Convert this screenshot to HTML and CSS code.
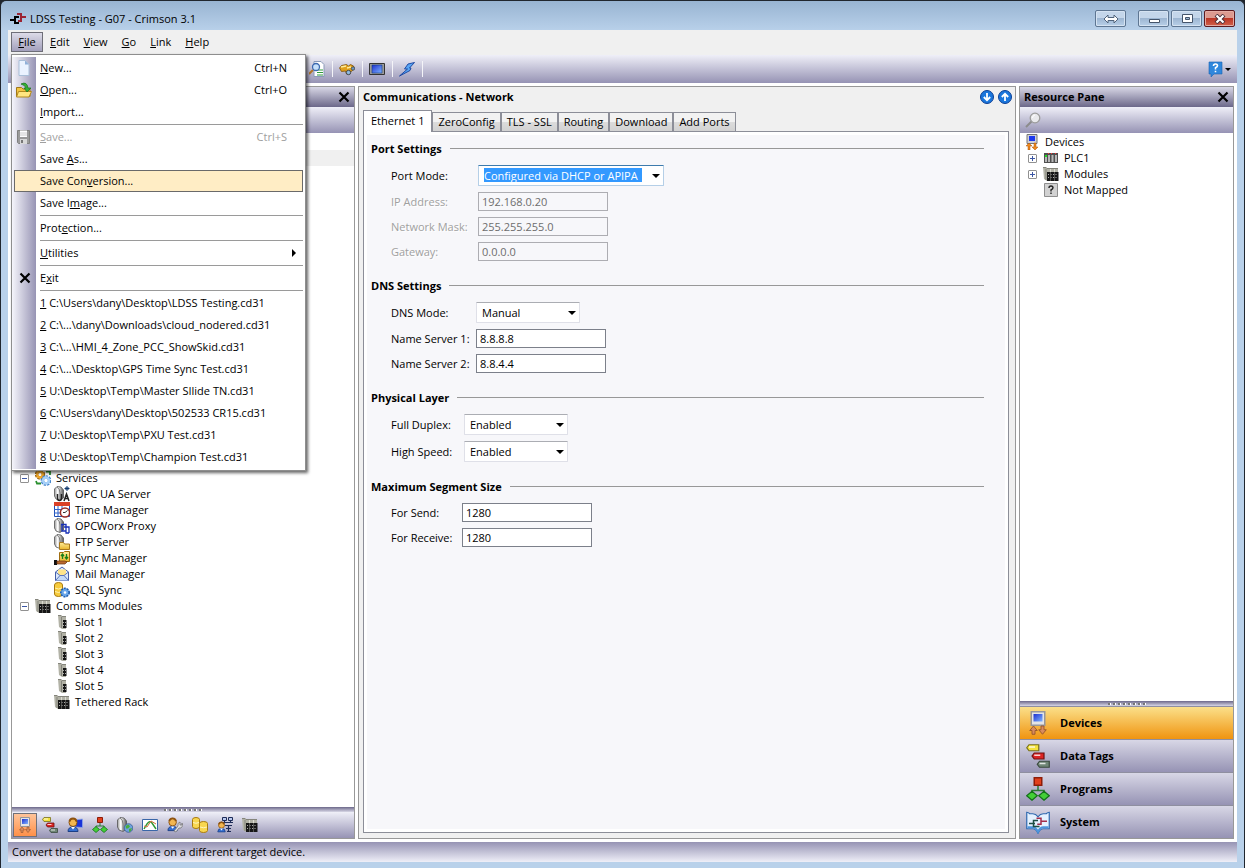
FILE: index.html
```
<!DOCTYPE html>
<html lang="en">
<head>
  <meta charset="UTF-8" />
  <title>LDSS Testing - G07 - Crimson 3.1</title>
  <meta name="viewport" content="width=device-width, initial-scale=1.0" />
  <link rel="stylesheet" href="styles.css">
</head>
<body>
  <!-- shared icons -->
  <svg class="sprite" aria-hidden="true">
    <defs>
      <linearGradient id="tower" x1="0" x2="1" y1="0" y2="0"><stop offset="0" stop-color="#999" /><stop offset="0.35" stop-color="#fff" /><stop offset="0.6" stop-color="#c4c4c4" /><stop offset="1" stop-color="#555" /></linearGradient>
      <linearGradient id="gold" x1="0" x2="0" y1="0" y2="1"><stop offset="0" stop-color="#ffee9a" /><stop offset="1" stop-color="#e9b52c" /></linearGradient>
      <linearGradient id="screen" x1="0" x2="1" y1="0" y2="1"><stop offset="0" stop-color="#1c2fd0" /><stop offset="1" stop-color="#7fb4ff" /></linearGradient>
    </defs>
    <symbol id="i-close" viewBox="0 0 12 12"><path d="M1.5 1.5l9 9M10.500 1.500l-9 9" stroke="#000" stroke-width="2.200" /></symbol>
    <symbol id="i-devices" viewBox="0 0 16 16">
      <path d="M3.500 .5h9v9h-9z" fill="#e4e4e6" stroke="#96969c" />
      <path d="M5 2h6v5H5z" fill="url(#screen)" />
      <path d="M5 10l2.500 3H6v2.500H4V13H2.500zM11 15.500L8.500 12.500H10V10h2v2.500h1.500z" fill="#d98a5e" stroke="#96552a" stroke-width=".6" />
    </symbol>
    <symbol id="i-tags" viewBox="0 0 16 16">
      <path d="M.5 2.500l1.500-2h6.500v4H2z" fill="#f4e23c" stroke="#77701c" stroke-width=".8" />
      <path d="M4 8l1.500-2H12v4H5.500z" fill="#dc2424" stroke="#701010" stroke-width=".8" />
      <path d="M7.500 13.500l1.500-2h6.500v4H9z" fill="#6f8676" stroke="#3a4a3e" stroke-width=".8" />
      <path d="M2 2h4M5.500 7.500h4M9 13h4" stroke="#fff" stroke-opacity=".8" />
    </symbol>
    <symbol id="i-programs" viewBox="0 0 16 16">
      <path d="M8 6v3M4 12V9h8v3" fill="none" stroke="#2c7a34" />
      <path d="M5.500 .5h5v5h-5z" fill="#e2401c" stroke="#8e1c08" />
      <path d="M4 9.500l3.500 3-3.500 3-3.500-3zM12 9.500l3.500 3-3.500 3-3.500-3z" fill="#43cf37" stroke="#14701a" stroke-width=".8" />
    </symbol>
    <symbol id="i-server" viewBox="0 0 16 16">
      <path d="M.5 3L3 .5l4 .5 2.500 3v8L6 14.500l-4-1.500L.5 10z" fill="url(#tower)" stroke="#555" stroke-width=".8" />
      <path d="M3 1q3 2 3 6v7" fill="none" stroke="#555" stroke-width=".7" />
    </symbol>
    <symbol id="i-web" viewBox="0 0 16 16">
      <use href="#i-server" width="16" height="16" />
      <circle cx="11.500" cy="11" r="4.300" fill="#6ea2dc" stroke="#2b5390" stroke-width=".7" />
      <path d="M8.500 9l3-1.500 1.500 2-2 2-2 0zM12 12l3-1-1 3-2 1z" fill="#49ae3c" />
    </symbol>
    <symbol id="i-opcua" viewBox="0 0 16 16">
      <use href="#i-server" width="16" height="16" />
      <path d="M3.500 8v4q0 2.500 2 2.500t2-2.500V8M10 15l2.500-7 2.500 7M11 12.500h3" fill="none" stroke="#222" stroke-width="1.500" />
      <path d="M13 0v5M10.500 2.500h5M11.500 1l3 3M14.500 1l-3 3" stroke="#123a70" />
    </symbol>
    <symbol id="i-time" viewBox="0 0 16 16">
      <path d="M.5 1.500h15v13H.5z" fill="#fff" stroke="#1f4fb4" />
      <path d="M0 0h16v4H0z" fill="#da4126" />
      <path d="M4 4v10M8 4v10M0 7.500h15M0 11h15" stroke="#2d62cc" />
      <circle cx="11" cy="10.500" r="4.600" fill="#fff" stroke="#9c2b22" stroke-width="1.500" />
      <path d="M11 10.500l2.500-2M11 10.500h-2" fill="none" stroke="#333" />
    </symbol>
    <symbol id="i-opcworx" viewBox="0 0 16 16">
      <use href="#i-server" width="16" height="16" />
      <path d="M7 6.500h5v5M8 7v6h4M10 9h5v6M12 11v4h3" fill="none" stroke="#1730b8" stroke-width="1.300" />
    </symbol>
    <symbol id="i-ftp" viewBox="0 0 16 16">
      <use href="#i-server" width="16" height="16" />
      <path d="M5.500 8.500h4l1 1.500h5v5.500h-10z" fill="url(#gold)" stroke="#a8781c" />
    </symbol>
    <symbol id="i-sync" viewBox="0 0 16 16">
      <path d="M5.500 2.500h4l1-1h5v10h-10z" fill="url(#gold)" stroke="#a06d10" />
      <path d="M8.500 9V4M7 6l1.500-2L10 6M12.500 4v5M11 7l1.500 2L14 7" fill="none" stroke="#168018" stroke-width="1.300" />
      <path d="M0 10h3v5H0z" fill="#111" />
      <path d="M3 11h8l2 1-2 2H3z" fill="#b9692f" stroke="#6a3512" stroke-width=".7" />
    </symbol>
    <symbol id="i-mail" viewBox="0 0 16 16">
      <path d="M1.500 6L8 1l6.500 5v8.500h-13z" fill="#dce9fb" stroke="#4660a8" />
      <path d="M4 3.500h8V8l-4 2-4-2z" fill="#ffe48a" />
      <path d="M1.500 14.500L6 9.500h4l4.500 5M1.500 6L6 9.500M14.500 6L10 9.500" fill="#c3d9f7" stroke="#5b74b8" />
    </symbol>
    <symbol id="i-sql" viewBox="0 0 16 16">
      <path d="M.5 3q0-2.500 4-2.500t4 2.500v9q0 2.500-4 2.500t-4-2.500z" fill="#f7cb3c" stroke="#a87a10" />
      <path d="M1 6q3.500 2 7 0M1 9.500q3.500 2 7 0" fill="none" stroke="#fff3b0" />
      <circle cx="11" cy="10.500" r="4.200" fill="#68a6ea" stroke="#1f5cae" stroke-dasharray="2 1" stroke-width="1.600" />
      <circle cx="11" cy="10.500" r="1.300" fill="#fff" />
    </symbol>
    <symbol id="i-services" viewBox="0 0 16 16">
      <circle cx="5" cy="4.500" r="3.400" fill="none" stroke="#9c6610" stroke-width="3.500" stroke-dasharray="2 .7" />
      <circle cx="5" cy="4.500" r="2.800" fill="none" stroke="#f0a626" stroke-width="2.200" />
      <circle cx="11" cy="10.500" r="3.600" fill="none" stroke="#4786cc" stroke-width="3.500" stroke-dasharray="2 .7" />
      <circle cx="11" cy="10.500" r="3" fill="none" stroke="#a6d0f8" stroke-width="2.400" />
      <path d="M11 1.500h4v3.500M1 11l1 2.500h4" fill="none" stroke="#2a9030" stroke-width="1.800" />
    </symbol>
    <symbol id="i-rack" viewBox="0 0 16 16">
      <path d="M0 1h3l1 1h11v13H4l-3-2z" fill="#b2b2a6" />
      <path d="M0 1.500h3l1 1h11M3 3v11" fill="none" stroke="#85857c" />
      <path d="M7.500 3v3M11.500 3v3" stroke="#dcdcd2" />
      <path d="M4 6h11.500v9H4z" fill="#161616" />
      <path d="M5 8.500h10M5 11.500h10" stroke="#aaa" stroke-dasharray="1 1.500" />
      <path d="M7.500 6v9M11.500 6v9" stroke="#6e6e68" stroke-width=".7" />
    </symbol>
    <symbol id="i-slot" viewBox="0 0 16 16">
      <path d="M4 1h3l1 1h4v13H8l-3-2z" fill="#b2b2a6" />
      <path d="M4 1.500h3l1 1h4M7.500 3v11" fill="none" stroke="#85857c" />
      <path d="M9 6h3.500v8H9z" fill="#161616" />
      <path d="M9 8.500h3M9 11.500h3" stroke="#aaa" stroke-dasharray="1 1" />
    </symbol>
    <symbol id="i-user" viewBox="0 0 16 16">
      <circle cx="6" cy="5.500" r="4" fill="#f2b650" stroke="#8e5310" />
      <path d="M1 14.500q0-4.500 5-4.500t5 4.500z" fill="#356fd0" stroke="#1c3f86" />
      <path d="M4 10h4l-2 2.500z" fill="#fff" />
      <path d="M2.500 4.500Q3 1.500 6 1.500t3.500 3" fill="none" stroke="#8e5310" stroke-width="2" />
    </symbol>
    <symbol id="i-display" viewBox="0 0 16 16">
      <path d="M8 3l7.500-1v8.500L8 10z" fill="#1a33d8" stroke="#8fa8e8" stroke-width=".8" />
      <use href="#i-user" width="16" height="16" />
    </symbol>
    <symbol id="i-chart" viewBox="0 0 16 16">
      <path d="M.5 2.500h15v11H.5z" fill="#fff" stroke="#3a66a8" />
      <path d="M2 12l3-5q3-4 5-1l4 6" fill="none" stroke="#2e9632" stroke-width="1.400" />
      <path d="M2 9l3 1 4-6 5 3" fill="none" stroke="#d0703c" />
    </symbol>
    <symbol id="i-security" viewBox="0 0 16 16">
      <use href="#i-user" width="15" height="15" />
      <path d="M7 14l4-5q-1-3 2-4v3l2 0v-2q2 3-1 5l-2 0-3 4z" fill="#dcdce2" stroke="#777" stroke-width=".8" />
    </symbol>
    <symbol id="i-data" viewBox="0 0 16 16">
      <path d="M.5 2.500q0-2 3.500-2t3.500 2v7q0 2-3.500 2t-3.500-2z" fill="#f9d750" stroke="#a87a10" />
      <path d="M7.500 6.500q0-2 4-2t4 2v7q0 2-4 2t-4-2z" fill="#f9d750" stroke="#a87a10" />
      <path d="M1 5.500q3 1.500 6 0M8 10q3.500 1.500 7 0" fill="none" stroke="#fff6c0" />
    </symbol>
    <symbol id="i-control" viewBox="0 0 16 16">
      <path d="M5.500 .5h4v3h-4zM11.500 .5h4v3h-4z" fill="#b8c8f0" stroke="#1f2c58" />
      <path d="M7.500 3v2.500h6V3M5 5.500h11M8 8.500h7M11.500 8.500v6M9 11.500h5M10 14.500h4" fill="none" stroke="#1f2c58" stroke-width="1.200" />
      <use href="#i-user" y="4" width="12" height="12" />
    </symbol>
    <symbol id="i-system" viewBox="0 0 16 16">
      <path d="M.5 1.500q1 0 2 1h2q2 0 3.500 2 1.500-2 3.500-2h2q1-1 2-1v11h-4q-2 0-3.500 3-1.500-3-3.500-3h-4z" fill="#e4f1ff" stroke="#2f69b0" stroke-width=".8" />
      <path d="M1 11.500h3.500q2 0 3.500 3 1.500-3 3.500-3H15" fill="none" stroke="#4d95dd" stroke-width="1.300" />
      <path d="M2 9h4M8 7H5v4h4" fill="none" stroke="#1d4d42" />
      <path d="M7 5.500h3v4H7.500M10 7.500h4" fill="none" stroke="#a32d4a" />
    </symbol>
    <symbol id="i-plc" viewBox="0 0 16 16">
      <path d="M1 3h14v10H1z" fill="#505050" />
      <path d="M2 7h2v5H2zM5 5h2v7H5zM8.500 5h2v7h-2zM12 5h2v7h-2z" fill="#b8b8b8" />
      <path d="M2 5h2v2H2z" fill="#20e020" />
      <path d="M5 3h1v1H5zM8 3h1v1H8zM12 3h1v1h-1z" fill="#f33" />
    </symbol>
    <symbol id="i-unknown" viewBox="0 0 16 16">
      <path d="M1.500 1.500h13v13h-13z" fill="#d2d2d2" stroke="#8f8f8f" />
      <path d="M6 6q0-2 2-2t2 1.800q0 1.200-2 2.200v1.500M8 10.500V12" fill="none" stroke="#222" stroke-width="1.400" />
    </symbol>
  </svg>

  <header class="titlebar">
    <svg class="logo" viewBox="0 0 16 12"><path d="M0 7h5M9 4H5v6h4" fill="none" stroke="#000" stroke-width="2" /><path d="M7 1h4v7H8M11 4h5" fill="none" stroke="#9c2433" stroke-width="2" /></svg>
    <h1>LDSS Testing - G07 - Crimson 3.1</h1>
    <div class="window-buttons">
      <button type="button" class="swap" aria-label="Switch screen"><svg viewBox="0 0 16 10"><path d="M1 5l4-4v2.500h6V1l4 4-4 4V6.500H5V9z" fill="#fff" stroke="#51647c" /></svg></button>
      <button type="button" aria-label="Minimize"><svg viewBox="0 0 16 10"><path d="M3.500 5.500h10v3h-10z" fill="#fff" stroke="#44546a" /></svg></button>
      <button type="button" aria-label="Maximize"><svg viewBox="0 0 16 10"><path d="M3.500 .5h10v8h-10zM6.500 3.500v2h4v-2z" fill="#fff" fill-rule="evenodd" stroke="#44546a" /></svg></button>
      <button type="button" class="shut" aria-label="Close"><svg viewBox="0 0 16 10"><path d="M4 1l8 8M12 1L4 9" stroke="#4a2f3a" stroke-width="4" /><path d="M4.500 1.500l7 7M11.500 1.500l-7 7" stroke="#fff" stroke-width="2.200" /></svg></button>
    </div>
  </header>

  <div class="client">
    <nav class="menubar">
      <button type="button" class="open"><u>F</u>ile</button>
      <button type="button"><u>E</u>dit</button>
      <button type="button"><u>V</u>iew</button>
      <button type="button"><u>G</u>o</button>
      <button type="button"><u>L</u>ink</button>
      <button type="button"><u>H</u>elp</button>

      <div class="menu">
        <button type="button"><svg viewBox="0 0 16 16"><path d="M3 .5h6l4 4v11H3z" fill="#eaf3ff" stroke="#a9bfd8" /><path d="M9 .5v4h4z" fill="#8fb0d8" /></svg><span><u>N</u>ew...</span><kbd>Ctrl+N</kbd></button>
        <button type="button"><svg viewBox="0 0 16 16"><path d="M.5 5.500h5l1.500 1.500h7v7.500H.5z" fill="#f3c440" stroke="#a07818" /><path d="M2.500 9.500h13l-2.500 5.500H.5z" fill="#ffe680" stroke="#b08820" /><path d="M5 2q6-3 7 4h3l-4 4-3-4h2q-1-3-5-4z" fill="#35b035" stroke="#17701a" stroke-width=".7" /></svg><span><u>O</u>pen...</span><kbd>Ctrl+O</kbd></button>
        <button type="button"><i></i><span><u>I</u>mport...</span></button>
        <hr>
        <button type="button" disabled><svg viewBox="0 0 16 16"><path d="M1.500 1.500h12v13h-11l-1-1z" fill="#9a9a9a" stroke="#808080" /><path d="M4 1.500h7V8H4z" fill="#fff" /><path d="M4 4h7M4 6h7" stroke="#ccc" /><path d="M4 10h7v5H4z" fill="#d8d8d8" /><path d="M5 11h2v3H5z" fill="#777" /></svg><span><u>S</u>ave...</span><kbd>Ctrl+S</kbd></button>
        <button type="button"><i></i><span>Save <u>A</u>s...</span></button>
        <button type="button" class="hot"><i></i><span>Save Con<u>v</u>ersion...</span></button>
        <button type="button"><i></i><span>Save I<u>m</u>age...</span></button>
        <hr>
        <button type="button"><i></i><span>Prot<u>e</u>ction...</span></button>
        <hr>
        <button type="button" class="submenu"><i></i><span><u>U</u>tilities</span></button>
        <hr>
        <button type="button"><svg class="exit"><use href="#i-close" /></svg><span>E<u>x</u>it</span></button>
        <hr>
        <button type="button"><i></i><span><u>1</u> C:\Users\dany\Desktop\LDSS Testing.cd31</span></button>
        <button type="button"><i></i><span><u>2</u> C:\...\dany\Downloads\cloud_nodered.cd31</span></button>
        <button type="button"><i></i><span><u>3</u> C:\...\HMI_4_Zone_PCC_ShowSkid.cd31</span></button>
        <button type="button"><i></i><span><u>4</u> C:\...\Desktop\GPS Time Sync Test.cd31</span></button>
        <button type="button"><i></i><span><u>5</u> U:\Desktop\Temp\Master SIlide TN.cd31</span></button>
        <button type="button"><i></i><span><u>6</u> C:\Users\dany\Desktop\502533 CR15.cd31</span></button>
        <button type="button"><i></i><span><u>7</u> U:\Desktop\Temp\PXU Test.cd31</span></button>
        <button type="button"><i></i><span><u>8</u> U:\Desktop\Temp\Champion Test.cd31</span></button>
      </div>
    </nav>

    <div class="toolbar">
      <button type="button" aria-label="Find in database"><svg viewBox="0 0 16 16"><path d="M5 .5h7l3 3v12H5z" fill="#fff" stroke="#8a9ab8" /><path d="M8 9h6M8 11.500h6M8 14h6" stroke="#2f9a3a" /><path d="M0 13l4-4" stroke="#b4762a" stroke-width="2" /><circle cx="7" cy="6" r="3.500" fill="#c6e0fb" stroke="#3c68b0" stroke-width="1.300" /></svg></button>
      <button type="button" aria-label="Browse"><svg viewBox="0 0 16 16"><path d="M.5 7l2-2.500 5-1 2 1.500 2-1.500 3 1.500 1 3-3 2-2 3-3 0-1-3-4 .5z" fill="#e0a01c" stroke="#7c520a" stroke-width=".8" /><path d="M2 6l5-1M8 7l4-1" fill="none" stroke="#ffec9c" stroke-width="1.300" /><circle cx="9.500" cy="11.500" r="2.200" fill="#8fbbe2" stroke="#333" stroke-width=".8" /><circle cx="14" cy="7.500" r="1.700" fill="#6c98c4" stroke="#333" stroke-width=".6" /></svg></button>
      <button type="button" aria-label="Emulator"><svg viewBox="0 0 16 16"><path d="M.5 2.500h15v11H.5z" fill="#9a9a9a" stroke="#333" /><path d="M3 4h10v8H3z" fill="url(#screen)" stroke="#123a80" stroke-width=".6" /></svg></button>
      <button type="button" aria-label="Download"><svg viewBox="0 0 16 16"><path d="M15.500 1.500L9 3 5.500 8h3L.5 15 11 9.500l1-2.500h-1.500z" fill="#58a6f4" stroke="#153f9c" stroke-width=".9" /></svg></button>
      <button type="button" class="help" aria-label="Help"><svg viewBox="0 0 16 16"><path d="M1 1h13v12H6l-3 3v-3H1z" fill="#2f87dc" stroke="#1c62b0" stroke-width=".6" /><path d="M5.500 5q0-2 2-2t2 1.800q0 1-2 2v1.700M7.500 9.700v1.600" fill="none" stroke="#fff" stroke-width="1.600" /></svg></button>
    </div>

    <main class="panes">
      <section class="pane">
        <div class="pane-title"><h2></h2><button type="button" aria-label="Close pane"><svg><use href="#i-close" /></svg></button></div>
        <div class="pane-tools"></div>
        <ul class="tree nav-tree">
          <li class="selected"></li>
          <li><span class="toggle minus"></span><svg><use href="#i-services" /></svg>Services</li>
          <li class="child"><svg><use href="#i-opcua" /></svg>OPC UA Server</li>
          <li class="child"><svg><use href="#i-time" /></svg>Time Manager</li>
          <li class="child"><svg><use href="#i-opcworx" /></svg>OPCWorx Proxy</li>
          <li class="child"><svg><use href="#i-ftp" /></svg>FTP Server</li>
          <li class="child"><svg><use href="#i-sync" /></svg>Sync Manager</li>
          <li class="child"><svg><use href="#i-mail" /></svg>Mail Manager</li>
          <li class="child"><svg><use href="#i-sql" /></svg>SQL Sync</li>
          <li><span class="toggle minus"></span><svg><use href="#i-rack" /></svg>Comms Modules</li>
          <li class="child"><svg><use href="#i-slot" /></svg>Slot 1</li>
          <li class="child"><svg><use href="#i-slot" /></svg>Slot 2</li>
          <li class="child"><svg><use href="#i-slot" /></svg>Slot 3</li>
          <li class="child"><svg><use href="#i-slot" /></svg>Slot 4</li>
          <li class="child"><svg><use href="#i-slot" /></svg>Slot 5</li>
          <li class="child"><svg><use href="#i-rack" /></svg>Tethered Rack</li>
        </ul>
        <div class="splitter"></div>
        <div class="categories">
          <button type="button" class="active" aria-label="Communications"><svg><use href="#i-devices" /></svg></button>
          <button type="button" aria-label="Data tags"><svg><use href="#i-tags" /></svg></button>
          <button type="button" aria-label="Display pages"><svg><use href="#i-display" /></svg></button>
          <button type="button" aria-label="Programs"><svg><use href="#i-programs" /></svg></button>
          <button type="button" aria-label="Web server"><svg><use href="#i-web" /></svg></button>
          <button type="button" aria-label="Data logger"><svg><use href="#i-chart" /></svg></button>
          <button type="button" aria-label="Security"><svg><use href="#i-security" /></svg></button>
          <button type="button" aria-label="SQL queries"><svg><use href="#i-data" /></svg></button>
          <button type="button" aria-label="Control"><svg><use href="#i-control" /></svg></button>
          <button type="button" aria-label="Modules"><svg><use href="#i-rack" /></svg></button>
        </div>
      </section>

      <section class="pane editor">
        <div class="editor-title">
          <h2>Communications - Network</h2>
          <button type="button" aria-label="Next item"><svg viewBox="0 0 14 14"><circle cx="7" cy="7" r="6.500" fill="#1b76dc" stroke="#0c3f94" /><path d="M7 3v7M3.800 7L7 10.200 10.200 7" fill="none" stroke="#fff" stroke-width="1.800" /></svg></button>
          <button type="button" aria-label="Previous item"><svg viewBox="0 0 14 14"><circle cx="7" cy="7" r="6.500" fill="#1b76dc" stroke="#0c3f94" /><path d="M7 11V4M3.800 7L7 3.800 10.200 7" fill="none" stroke="#fff" stroke-width="1.800" /></svg></button>
        </div>
        <div class="tabs">
          <button type="button" class="active">Ethernet 1</button>
          <button type="button">ZeroConfig</button>
          <button type="button">TLS - SSL</button>
          <button type="button">Routing</button>
          <button type="button">Download</button>
          <button type="button">Add Ports</button>
        </div>
        <form class="tab-page">
          <fieldset class="port">
            <legend><span>Port Settings</span></legend>
            <div class="field pick"><label for="port-mode">Port Mode:</label><span class="select wide"><select id="port-mode"><option>Configured via DHCP or APIPA</option></select></span></div>
            <div class="field off"><label for="ip">IP Address:</label><input type="text" id="ip" value="192.168.0.20" disabled /></div>
            <div class="field off"><label for="mask">Network Mask:</label><input type="text" id="mask" value="255.255.255.0" disabled /></div>
            <div class="field off"><label for="gateway">Gateway:</label><input type="text" id="gateway" value="0.0.0.0" disabled /></div>
          </fieldset>
          <fieldset class="dns">
            <legend><span>DNS Settings</span></legend>
            <div class="field pick"><label for="dns-mode">DNS Mode:</label><span class="select"><select id="dns-mode"><option>Manual</option></select></span></div>
            <div class="field"><label for="ns1">Name Server 1:</label><input type="text" id="ns1" value="8.8.8.8" /></div>
            <div class="field"><label for="ns2">Name Server 2:</label><input type="text" id="ns2" value="8.8.4.4" /></div>
          </fieldset>
          <fieldset class="physical">
            <legend><span>Physical Layer</span></legend>
            <div class="field pick"><label for="duplex">Full Duplex:</label><span class="select"><select id="duplex"><option>Enabled</option></select></span></div>
            <div class="field pick"><label for="speed">High Speed:</label><span class="select"><select id="speed"><option>Enabled</option></select></span></div>
          </fieldset>
          <fieldset class="segment">
            <legend><span>Maximum Segment Size</span></legend>
            <div class="field"><label for="send">For Send:</label><input type="text" id="send" value="1280" /></div>
            <div class="field"><label for="receive">For Receive:</label><input type="text" id="receive" value="1280" /></div>
          </fieldset>
        </form>
      </section>

      <section class="pane">
        <div class="pane-title"><h2>Resource Pane</h2><button type="button" aria-label="Close resource pane"><svg><use href="#i-close" /></svg></button></div>
        <div class="pane-tools"><button type="button" aria-label="Search"><svg viewBox="0 0 16 16"><path d="M1 15l6-6" stroke="#8c8c8c" stroke-width="2" /><circle cx="10" cy="6" r="4.800" fill="#e9e9ec" stroke="#9c9c9c" stroke-width="1.300" /><path d="M7.500 6q0-2.500 2.500-3" fill="none" stroke="#fff" /></svg></button></div>
        <ul class="tree resource-tree">
          <li class="root"><svg viewBox="0 0 16 16"><path d="M3 .5h10v9H3z" fill="#d0d0d8" stroke="#777" /><path d="M5 2h6v5H5z" fill="#1c38ee" /><path d="M5 9l3 3H6v4H4v-4H2zM11 16l-3-3h2V9h2v4h2z" fill="#f08a1c" stroke="#a8500c" stroke-width=".5" /></svg>Devices</li>
          <li><span class="toggle"></span><svg><use href="#i-plc" /></svg>PLC1</li>
          <li><span class="toggle"></span><svg><use href="#i-rack" /></svg>Modules</li>
          <li class="leaf"><svg><use href="#i-unknown" /></svg>Not Mapped</li>
        </ul>
        <div class="splitter"></div>
        <div class="stack">
          <button type="button" class="active"><svg><use href="#i-devices" /></svg>Devices</button>
          <button type="button"><svg><use href="#i-tags" /></svg>Data Tags</button>
          <button type="button"><svg><use href="#i-programs" /></svg>Programs</button>
          <button type="button"><svg><use href="#i-system" /></svg>System</button>
        </div>
      </section>
    </main>

    <footer class="statusbar">Convert the database for use on a different target device.</footer>
  </div>
</body>
</html>
```

FILE: styles.css
```
* {
  box-sizing: border-box;
}
body {
  margin: 0;
  height: 100vh;
  display: flex;
  flex-direction: column;
  padding: 0 7px 6px;
  border: 1px solid #20262e;
  border-bottom: none;
  border-radius: 6px 6px 0 0;
  background: linear-gradient(#98b4d2, #b9d1ea 30px);
  font-family: "Open Sans", "Noto Sans", sans-serif;
  font-size: 11px;
  line-height: 16px;
  color: #000;
}
html {
  background: #20262e;
}
button, input, select {
  font: inherit;
  color: inherit;
  margin: 0;
}
button {
  padding: 0;
  border: none;
  background: none;
}
h1, h2 {
  margin: 0;
  font-size: 11px;
}
svg {
  display: block;
  flex: none;
  width: 16px;
  height: 16px;
}
.sprite {
  position: absolute;
  width: 0;
  height: 0;
}

/* title bar */
.titlebar {
  flex: none;
  display: flex;
  align-items: center;
  height: 29px;
  padding: 6px 2px 0;
}
.logo {
  height: 12px;
  margin-right: 4px;
}
.titlebar h1 {
  flex: 1;
  font-weight: normal;
}
.window-buttons {
  display: flex;
  gap: 2px;
}
.window-buttons button {
  display: grid;
  place-items: center;
  width: 31px;
  height: 17px;
  border: 1px solid #5e7692;
  border-radius: 2px;
  background: linear-gradient(#c4d6ea 50%, #9db6d2 50%, #b8d0e8);
  box-shadow: inset 0 0 0 1px #d5e3f2;
}
.window-buttons .swap {
  margin-right: 10px;
}
.window-buttons .shut {
  border-color: #5c1a20;
  background: linear-gradient(#dc9a90 50%, #bb3626 50%, #d2614c);
  box-shadow: inset 0 0 0 1px #e4aca4;
}
.window-buttons svg {
  height: 10px;
}

.client {
  flex: 1;
  min-height: 0;
  display: flex;
  flex-direction: column;
  background: #fff;
}

/* menu bar and File menu */
.menubar {
  position: relative;
  display: flex;
  flex: none;
  height: 25px;
  padding: 2px 3px 3px;
  background: #f0f0f0;
}
.menubar > button {
  height: 20px;
  padding: 0 6px;
  border: 1px solid transparent;
}
.menubar > .open {
  width: 32px;
  border-color: #6e6e78;
  background: linear-gradient(#dcdbe8, #a3a0bc);
}
.menu {
  position: absolute;
  z-index: 1;
  top: 24px;
  left: 3px;
  width: 295px;
  padding: 2px;
  border: 1px solid #8e8e8e;
  background: linear-gradient(90deg, #f5f5fb, #9794b4) 0 2px / 24px 412px no-repeat, #fff;
  box-shadow: 2px 2px 3px rgba(0, 0, 0, 0.6);
}
.menu button {
  display: grid;
  grid-template-columns: 25px 1fr auto;
  align-items: center;
  width: 100%;
  height: 22px;
  padding: 0 15px 0 0;
  border: 1px solid transparent;
  text-align: left;
}
.menu svg {
  margin-left: 1px;
}
.menu .exit {
  width: 12px;
  height: 12px;
  margin-left: 4px;
}
.menu kbd {
  font: inherit;
}
.menu button:disabled {
  color: #a0a0a0;
}
.menu .hot {
  border-color: #6a6a6a;
  background: #ffedc5;
}
.menu .submenu {
  padding-right: 6px;
}
.menu .submenu::after {
  content: "";
  border: 4px solid transparent;
  border-left-color: #000;
  border-right-width: 0;
}
.menu hr {
  height: 1px;
  margin: 1px 0 1px 26px;
  border: none;
  background: #9a9a9a;
}

/* toolbar */
.toolbar {
  flex: none;
  display: flex;
  align-items: center;
  height: 28px;
  padding: 0 6px 0 295px;
  background: linear-gradient(#efeff8, #9693b4);
}
.toolbar button {
  padding: 0 7px 0 6px;
  border-right: 1px solid #f4f4f8;
}
.toolbar .help {
  display: flex;
  align-items: center;
  gap: 1px;
  margin-left: auto;
  padding: 0;
  border: none;
}
.help::after {
  content: "";
  border: 3px solid transparent;
  border-top-color: #000;
  border-bottom: none;
}

/* panes */
.panes {
  flex: 1;
  min-height: 0;
  display: grid;
  grid-template-columns: 344px 1fr 215px;
  gap: 3px;
  padding: 3px;
}
.pane {
  min-width: 0;
  min-height: 0;
  display: flex;
  flex-direction: column;
  border: 1px solid #989898;
  background: #fff;
}
.pane-title {
  display: flex;
  justify-content: space-between;
  align-items: center;
  height: 20px;
  padding: 0 4px;
  background: linear-gradient(#d8d7e6, #6c688a);
}
.pane-title svg {
  width: 12px;
  height: 12px;
}
.pane-tools {
  display: flex;
  align-items: center;
  height: 26px;
  padding: 0 5px;
  background: linear-gradient(#efeff8, #9693b4);
}
.tree {
  flex: 1;
  min-height: 0;
  margin: 0;
  padding: 1px 0 0;
  list-style: none;
  overflow: hidden;
}
.tree li {
  display: flex;
  align-items: center;
  gap: 5px;
  height: 16px;
  padding-left: 8px;
}
.nav-tree {
  padding-top: 17px;
}
.nav-tree .selected {
  margin-bottom: 304px;
  background: #f0f0f0;
}
.nav-tree .child {
  padding-left: 42px;
}
.resource-tree .root {
  padding-left: 4px;
}
.resource-tree .leaf {
  padding-left: 23px;
}
.toggle {
  display: grid;
  place-items: center;
  width: 9px;
  height: 9px;
  margin-right: 1px;
  border: 1px solid #919191;
  border-radius: 1px;
  background:
    linear-gradient(#3b56a4, #3b56a4) center / 5px 1px no-repeat,
    linear-gradient(#3b56a4, #3b56a4) center / 1px 5px no-repeat, #fff;
}
.toggle.minus {
  background: linear-gradient(#3b56a4, #3b56a4) center / 5px 1px no-repeat, #fff;
}
.splitter {
  display: grid;
  place-items: center;
  height: 5px;
  background: linear-gradient(#6c688a, #d8d7e6);
}
.splitter::after {
  content: "";
  width: 38px;
  height: 2px;
  background: repeating-linear-gradient(90deg, #777 0 2px, #fff 2px 3px, transparent 3px 5px);
}
.categories {
  display: flex;
  gap: 1px;
  height: 26px;
  padding: 1px;
  background: linear-gradient(#efeff8, #9693b4);
}
.categories button {
  display: grid;
  place-items: center;
  width: 24px;
  height: 24px;
  border: 1px solid transparent;
}
.categories .active {
  border-color: #707078;
  background: linear-gradient(#ffc49a, #ff9048);
}
.stack button {
  display: flex;
  align-items: center;
  gap: 10px;
  width: 100%;
  height: 33px;
  padding-left: 6px;
  border-top: 1px solid #8f8fa0;
  background: linear-gradient(#d8d7e6, #9693b4);
  font-weight: bold;
}
.stack .active {
  background: linear-gradient(#fbe08a, #f09410);
}
.stack svg {
  width: 24px;
  height: 24px;
}

/* editor */
.editor {
  padding: 1px 6px 5px 4px;
  background: #f0f0f0;
}
.editor-title {
  display: flex;
  align-items: center;
  gap: 4px;
  height: 18px;
}
.editor-title h2 {
  flex: 1;
}
.editor-title button + button {
  margin-right: -3px;
}
.editor-title svg {
  width: 14px;
  height: 14px;
}
.tabs {
  display: flex;
  align-items: flex-end;
  height: 25px;
}
.tabs button {
  height: 19px;
  padding: 0 5px;
  border: 1px solid #8c8e98;
  border-bottom: none;
  background: linear-gradient(#f2f2f2 50%, #dcdcdc 50%, #d2d2d2);
}
.tabs .active {
  position: relative;
  height: 22px;
  margin-bottom: -1px;
  padding: 0 7px 2px;
  background: #fff;
}
.tab-page {
  flex: 1;
  border: 1px solid #8c8e98;
  box-shadow: inset 0 0 0 3px #fff;
  padding: 3px 24px 3px 7px;
  background: #f7f7fa;
}
fieldset {
  min-width: 0;
  margin: 0 0 8px;
  padding: 0;
  border: none;
}
legend {
  display: flex;
  align-items: center;
  gap: 8px;
  width: 100%;
  height: 27px;
  padding: 0;
  font-weight: bold;
}
legend::after {
  content: "";
  flex: 1;
  height: 1px;
  background: #989898;
}
.field {
  display: grid;
  grid-template-columns: 87px 1fr;
  align-items: center;
  height: 25px;
  padding-left: 20px;
}
.pick {
  height: 27px;
}
.dns .field {
  grid-template-columns: 85px 1fr;
}
.physical .field {
  grid-template-columns: 73px 1fr;
}
.segment .field {
  grid-template-columns: 71px 1fr;
}
.field input {
  width: 130px;
  height: 19px;
  padding: 0 3px;
  border: 1px solid #7c808a;
  background: #fff;
}
.off label {
  color: #a0a0a0;
  text-shadow: 1px 1px #fff;
}
.off input {
  border-color: #adadb2;
  background: #f7f7fa;
  color: #6d6d6d;
}
.select {
  position: relative;
  width: 104px;
  height: 21px;
}
.select select {
  appearance: none;
  width: 100%;
  height: 100%;
  padding: 0 5px;
  border: 1px solid #dfe0e8;
  border-top-color: #abadb3;
  border-radius: 1px;
  background: #fff;
}
.select::after {
  content: "";
  position: absolute;
  top: 9px;
  right: 4px;
  border: 4px solid transparent;
  border-top-color: #000;
  border-bottom: none;
}
.wide {
  width: 186px;
}
.wide select {
  border-color: #b5cfe7;
  border-top-color: #3d7bad;
  background: linear-gradient(#39f, #39f) 5px 2px / 158px 14px no-repeat, #fff;
  color: #fff;
}

.statusbar {
  flex: none;
  height: 20px;
  padding: 2px 4px;
  background: linear-gradient(#9693b4, #efeff8);
}
```
